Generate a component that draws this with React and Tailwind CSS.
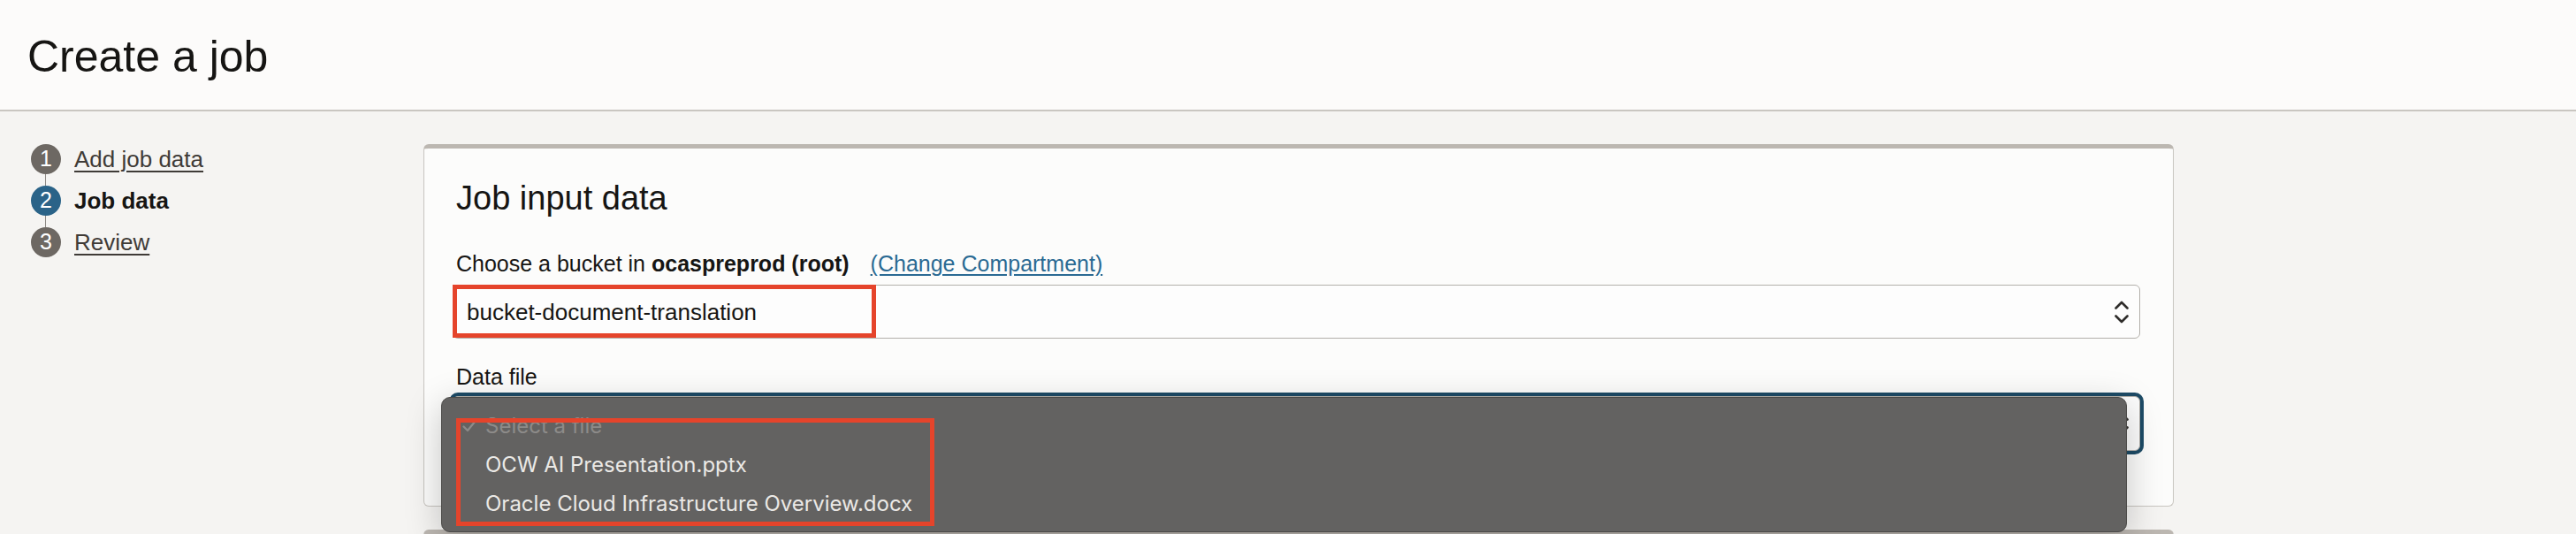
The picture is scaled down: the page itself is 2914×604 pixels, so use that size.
import React from 'react';

const steps = [
  { n: 1, label: 'Add job data', state: 'done' },
  { n: 2, label: 'Job data', state: 'current' },
  { n: 3, label: 'Review', state: 'todo' },
];

const files = ['OCW AI Presentation.pptx', 'Oracle Cloud Infrastructure Overview.docx'];

const Chevrons = () => (
  <svg width="16" height="28" viewBox="0 0 16 28" fill="none" stroke="#2f2d2b" strokeWidth="2.6" strokeLinecap="round" strokeLinejoin="round">
    <polyline points="1.5,9.5 8,3 14.5,9.5" />
    <polyline points="1.5,18.5 8,25 14.5,18.5" />
  </svg>
);

const App = () => {
  return (
    <div className="w-full h-[604px] overflow-hidden bg-[#f5f4f2] text-[#161513] font-['Liberation_Sans',Arial,sans-serif]">
      <div className="h-[126px] bg-[#fcfbfa] border-b-2 border-[#c9c6c1] flex items-center pl-[31px] pt-[3px]">
        <h1 className="text-[50px] leading-none font-normal">Create a job</h1>
      </div>

      <div className="flex pt-[37px]">
        <div className="w-[479px] shrink-0 pl-[35px]">
          {steps.map((s, i) => (
            <div key={s.n}>
              <div className="flex items-center h-[33px] gap-[15px]">
                <div className={'w-[34px] h-[34px] rounded-full flex items-center justify-center text-white text-[25px] leading-none ' + (s.state === 'current' ? 'bg-[#2a6388]' : 'bg-[#6d6863]')}>
                  {s.n}
                </div>
                {s.state === 'current' ? (
                  <span className="text-[26px] leading-none font-bold text-[#161513]">{s.label}</span>
                ) : (
                  <a href="#" className="text-[26px] leading-none text-[#3f3b37] underline underline-offset-[4px] decoration-[2px]">{s.label}</a>
                )}
              </div>
              {i < steps.length - 1 && <div className="ml-[16px] w-[1px] h-[14px] bg-[#8c8884]"></div>}
            </div>
          ))}
        </div>

        <div className="w-[1980px] shrink-0 flex flex-col gap-[26px]">
          <div className="rounded-[6px] border border-[#c8c5c0] border-t-[5px] border-t-[#bcb7b1] bg-[#fcfcfb] pl-[32px] pr-[37px] pt-[37px] pb-[62px]">
            <h2 className="text-[38px] leading-none font-normal pl-[4px]">Job input data</h2>

            <div className="mt-[43px] text-[25px] leading-none pl-[4px] flex">
              <span>Choose a bucket in <b>ocaspreprod (root)</b></span>
              <a href="#" className="ml-[24px] text-[#2a6a93] underline underline-offset-[3px]">(Change Compartment)</a>
            </div>

            <div className="relative mt-[11px] h-[61px] rounded-[6px] border border-[#b3b0ab] bg-[#fdfdfd] flex items-center justify-between pl-[15px] pr-[12px]">
              <span className="text-[26px] leading-none">bucket-document-translation</span>
              <Chevrons />
              <div className="absolute left-[-1px] top-[-1px] w-[479px] h-[60px] border-[5px] border-[#e5442b]"></div>
            </div>

            <div className="mt-[31px] text-[25px] leading-none pl-[4px]">Data file</div>

            <div className="relative mt-[9px] h-[62px]">
              <div className="h-full rounded-[6px] border border-[#b3b0ab] bg-[#fdfdfd] shadow-[0_0_0_4px_#1d4b66] flex items-center justify-end pr-[12px]">
                <Chevrons />
              </div>

              <div className="absolute z-10 left-[-13px] top-[1px] w-[1907px] h-[153px] rounded-[10px] border border-[#4a4947] bg-[#636261] shadow-[0_10px_40px_rgba(0,0,0,0.22)] py-[10px] font-['Inter','Liberation_Sans',sans-serif] text-[24px] leading-none">
                <div className="h-[44px] flex items-center text-[#8d8b89]">
                  <svg className="ml-[23px] w-[16px] h-[14px]" viewBox="0 0 16 14" fill="none" stroke="#8d8b89" strokeWidth="2.2" strokeLinecap="round" strokeLinejoin="round">
                    <polyline points="1.5,7.5 6,12 14.5,1.5" />
                  </svg>
                  <span className="ml-[10px]">Select a file</span>
                </div>
                {files.map((f) => (
                  <div key={f} className="h-[44px] flex items-center pl-[49px] text-[#ebe9e6]">{f}</div>
                ))}
                <div className="absolute left-[16px] top-[23px] w-[541px] h-[122px] border-[5px] border-[#e5442b]"></div>
              </div>
            </div>
          </div>

          <div className="h-[200px] rounded-[6px] border border-[#c8c5c0] border-t-[5px] border-t-[#bcb7b1] bg-[#fcfcfb]"></div>
        </div>
      </div>
    </div>
  );
};

export default App;
